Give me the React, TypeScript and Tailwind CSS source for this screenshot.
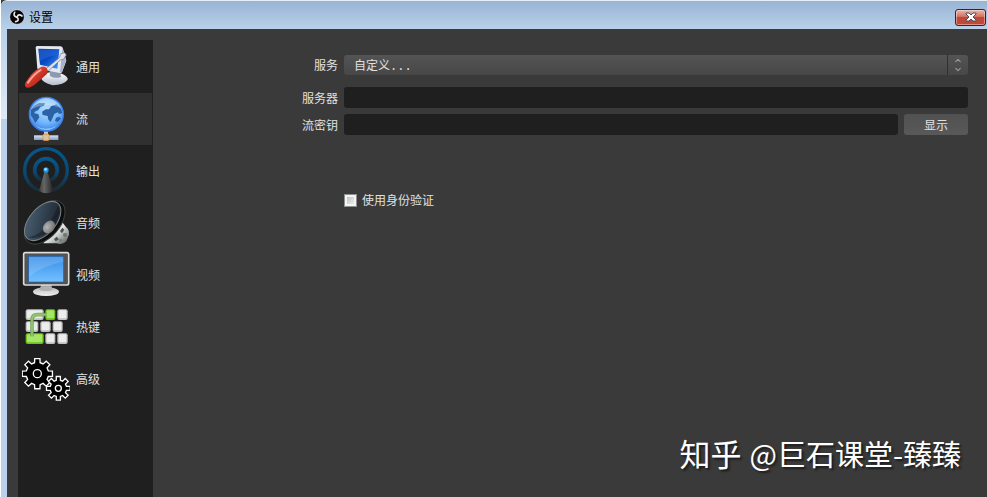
import { ChevronDown, ChevronUp } from 'lucide-react';
import type { ReactNode } from 'react';

const gearPath = (cx: number, cy: number, outer: number, inner: number, teeth = 8) => {
  const points: string[] = [];
  const step = (Math.PI * 2) / teeth;
  for (let i = 0; i < teeth; i++) {
    const a = i * step - Math.PI / 2;
    const corners: [number, number][] = [
      [inner, -0.25],
      [outer, -0.17],
      [outer, 0.17],
      [inner, 0.25],
    ];
    corners.forEach(([r, d]) => {
      points.push(`${(cx + r * Math.cos(a + d)).toFixed(1)},${(cy + r * Math.sin(a + d)).toFixed(1)}`);
    });
  }
  return `M${points.join('L')}Z`;
};

const GeneralIcon = () => (
  <svg viewBox="66 129 144 144" className="size-12 shrink-0">
    <defs>
      <linearGradient id="gen-screen" x1="0" y1="0" x2="1" y2="1">
        <stop offset="0" stopColor="#062f92" />
        <stop offset="0.5" stopColor="#0b4cc8" />
        <stop offset="1" stopColor="#3f9bff" />
      </linearGradient>
      <linearGradient id="gen-handle" x1="0" y1="0" x2="1" y2="1">
        <stop offset="0" stopColor="#f58672" />
        <stop offset="0.45" stopColor="#d63a2a" />
        <stop offset="1" stopColor="#8e1409" />
      </linearGradient>
      <linearGradient id="gen-base" x1="0" y1="0" x2="0" y2="1">
        <stop offset="0" stopColor="#ffffff" />
        <stop offset="1" stopColor="#b3bccb" />
      </linearGradient>
    </defs>
    <path d="M122 232Q126 220 150 217L186 221Q205 230 203 239Q192 254 158 256Q126 248 122 232Z" fill="url(#gen-base)" />
    <path d="M148 208L178 212L184 230Q168 238 150 228Z" fill="#8d9bb2" />
    <path d="M107 142Q108 138 113 138L182 139Q188 140 189 146L199 182L186 217Q184 220 179 219L112 206Z" fill="#e4e8f0" />
    <path d="M187 145L198 182L186 216L180 216Z" fill="#a9b3c8" />
    <path d="M115 146L178 148L172 206L120 194Z" fill="url(#gen-screen)" />
    <path d="M116 148L177 150L175 166Q146 166 119 184Z" fill="#2468d8" opacity="0.6" />
    <path d="M137 207L178 173L182 161L194 158L199 165L190 178L181 180L144 214Z" fill="#dce1ea" stroke="#6b7588" strokeWidth="2" />
    <path d="M76 249Q96 216 118 204Q130 196 139 203Q147 213 140 223L106 253Q86 268 77 261Q73 256 76 249Z" fill="url(#gen-handle)" />
    <path d="M84 248Q102 222 122 210" fill="none" stroke="#ffc2b5" strokeWidth="6" strokeLinecap="round" opacity="0.8" />
  </svg>
);

const StreamIcon = () => (
  <svg viewBox="66 15 144 144" className="size-12 shrink-0">
    <defs>
      <radialGradient id="globe" cx="0.5" cy="0.35" r="0.7">
        <stop offset="0" stopColor="#b9e0ff" />
        <stop offset="0.6" stopColor="#6fb4fa" />
        <stop offset="1" stopColor="#2f74e0" />
      </radialGradient>
      <linearGradient id="pipe" x1="0" y1="0" x2="0" y2="1">
        <stop offset="0" stopColor="#dbe7f5" />
        <stop offset="1" stopColor="#7f9dc4" />
      </linearGradient>
    </defs>
    <rect x="132" y="118" width="12" height="22" fill="#b9cbe2" />
    <rect x="102" y="136" width="73" height="14" fill="url(#pipe)" />
    <rect x="129" y="133" width="18" height="18" rx="3" fill="#d8c3a4" stroke="#e09a4c" strokeWidth="3" />
    <circle cx="139" cy="73" r="51" fill="url(#globe)" stroke="#3c7ee8" strokeWidth="4" />
    <path d="M93 60L103 47L117 39L136 40L131 47L121 50L115 60L104 65L103 70L115 73L118 82L109 95L105 98L100 87L92 75Z" fill="#2b62a6" />
    <path d="M126 65L137 58L147 58L154 48L170 43L183 56L187 69L178 72L173 67L163 72L158 83L152 96L145 89L143 78L128 75Z" fill="#2b62a6" />
    <path d="M168 83L178 80L183 86L173 96L165 93Z" fill="#2b62a6" />
    <path d="M94 57Q112 26 139 25Q167 27 182 53Q138 36 94 57Z" fill="#ffffff" opacity="0.3" />
    <path d="M107 108Q138 125 171 107Q139 133 107 108Z" fill="#a8deff" opacity="0.7" />
  </svg>
);

const OutputIcon = () => (
  <svg viewBox="66 171 144 144" className="size-12 shrink-0">
    <defs>
      <linearGradient id="mast" x1="0" y1="0" x2="1" y2="0">
        <stop offset="0" stopColor="#3a3a3a" />
        <stop offset="0.35" stopColor="#666666" />
        <stop offset="1" stopColor="#222222" />
      </linearGradient>
      <linearGradient id="wave" x1="0" y1="0" x2="0" y2="1">
        <stop offset="0" stopColor="#07578c" />
        <stop offset="0.6" stopColor="#094870" />
        <stop offset="1" stopColor="#1b2a34" />
      </linearGradient>
    </defs>
    <circle cx="138" cy="240" r="64" fill="none" stroke="url(#wave)" strokeWidth="10" />
    <circle cx="138" cy="240" r="34" fill="none" stroke="url(#wave)" strokeWidth="11" />
    <path d="M134 243L142 243L160 302Q139 317 117 302Z" fill="url(#mast)" />
    <circle cx="138" cy="240" r="8" fill="#1698e8" />
    <circle cx="137" cy="238" r="4" fill="#9fe0ff" />
  </svg>
);

const AudioIcon = () => (
  <svg viewBox="66 12 144 144" className="size-12 shrink-0">
    <defs>
      <linearGradient id="cone" x1="0" y1="0" x2="1" y2="1">
        <stop offset="0" stopColor="#50657a" />
        <stop offset="0.55" stopColor="#2f3e4c" />
        <stop offset="1" stopColor="#171c22" />
      </linearGradient>
      <linearGradient id="magnet" x1="0" y1="0" x2="1" y2="1">
        <stop offset="0" stopColor="#8b938f" />
        <stop offset="0.5" stopColor="#e4e8e5" />
        <stop offset="1" stopColor="#4a4f4d" />
      </linearGradient>
      <radialGradient id="cap" cx="0.4" cy="0.35" r="0.7">
        <stop offset="0" stopColor="#b4b4b4" />
        <stop offset="1" stopColor="#6d6d6d" />
      </radialGradient>
    </defs>
    <path d="M184 78L198 96Q209 104 207 119L199 139Q188 151 170 145L130 145Z" fill="url(#magnet)" />
    <path d="M180 108L187 98L193 104L186 115ZM162 132L170 125L177 133L167 139Z" fill="#4b5452" />
    <circle cx="195" cy="120" r="6" fill="#6e7774" />
    <circle cx="182" cy="136" r="5" fill="#77807d" />
    <ellipse cx="134" cy="82" rx="77" ry="45" transform="rotate(-49 134 82)" fill="#0c0d0e" stroke="#3a403e" strokeWidth="3" />
    <ellipse cx="128" cy="78" rx="70" ry="39" transform="rotate(-49 128 78)" fill="url(#cone)" stroke="#7b8581" strokeWidth="3" />
    <path d="M82 126Q134 126 174 34Q185 51 158 94Q122 140 82 126Z" fill="#111820" opacity="0.5" />
    <ellipse cx="147" cy="96" rx="21" ry="16" transform="rotate(-50 147 96)" fill="url(#cap)" />
  </svg>
);

const VideoIcon = () => (
  <svg viewBox="66 168 144 144" className="size-12 shrink-0">
    <defs>
      <linearGradient id="lcd" x1="0" y1="0" x2="0" y2="1">
        <stop offset="0" stopColor="#398ee8" />
        <stop offset="1" stopColor="#72c1ff" />
      </linearGradient>
      <linearGradient id="stand" x1="0" y1="0" x2="0" y2="1">
        <stop offset="0" stopColor="#bdbdbd" />
        <stop offset="1" stopColor="#f0f0f0" />
      </linearGradient>
    </defs>
    <path d="M124 268H153L158 285H119Z" fill="#a7a7a7" />
    <ellipse cx="138" cy="290" rx="39" ry="13" fill="url(#stand)" />
    <ellipse cx="138" cy="282" rx="21" ry="6" fill="#b0b0b0" />
    <rect x="71" y="173" width="135" height="97" rx="5" fill="#4a4a4a" stroke="#dcdcdc" strokeWidth="5" />
    <rect x="76" y="178" width="125" height="88" fill="#555555" />
    <rect x="86" y="184" width="105" height="77" fill="url(#lcd)" stroke="#1f5fae" strokeWidth="2" />
    <path d="M87 185H190V200Q126 212 87 246Z" fill="#ffffff" opacity="0.14" />
  </svg>
);

const keys = [
  { x: 77, y: 28, w: 54, on: false },
  { x: 136, y: 28, w: 30, on: true },
  { x: 172, y: 28, w: 31, on: false },
  { x: 77, y: 64, w: 38, on: false },
  { x: 121, y: 64, w: 31, on: false },
  { x: 158, y: 64, w: 30, on: false },
  { x: 77, y: 100, w: 54, on: true },
  { x: 136, y: 100, w: 30, on: false },
  { x: 172, y: 100, w: 31, on: false },
];

const HotkeysIcon = () => (
  <svg viewBox="66 9 144 144" className="size-12 shrink-0">
    {keys.map((k) => (
      <g key={`${k.x}-${k.y}`}>
        <rect x={k.x} y={k.y} width={k.w} height="32" rx="6" fill={k.on ? '#6cc01f' : '#c0c0c0'} />
        <rect x={k.x + 4} y={k.y + 3} width={k.w - 8} height="24" rx="4" fill={k.on ? '#a6e565' : '#ececec'} />
      </g>
    ))}
    <path d="M96 109V60Q96 44 112 44H140" fill="none" stroke="#6ba548" strokeWidth="11" opacity="0.85" />
    <path d="M96 109V60Q96 44 112 44H140" fill="none" stroke="#94c475" strokeWidth="5" />
  </svg>
);

const AdvancedIcon = () => (
  <svg viewBox="66 165 144 144" className="size-12 shrink-0">
    <g fill="#000000" stroke="#ffffff" strokeWidth="4" strokeLinejoin="miter">
      <path d={gearPath(112, 221, 46, 34)} />
      <circle cx="112" cy="221" r="12" />
      <path d={gearPath(175, 265, 36, 25)} />
      <circle cx="175" cy="265" r="9" />
    </g>
  </svg>
);

const ObsLogo = () => (
  <svg viewBox="0 0 48 48" className="size-4 shrink-0">
    <circle cx="24" cy="24" r="22" fill="#050505" stroke="#dfe7f0" strokeWidth="2" />
    <g fill="none" stroke="#e8e8e8" strokeWidth="5" strokeLinecap="round">
      <path d="M17 10Q11 20 23 25" />
      <path d="M39 21Q29 13 24 24" />
      <path d="M20 38Q32 36 25 25" />
    </g>
  </svg>
);

type NavItem = {
  label: string;
  icon: ReactNode;
};

const navItems: NavItem[] = [
  { label: '通用', icon: <GeneralIcon /> },
  { label: '流', icon: <StreamIcon /> },
  { label: '输出', icon: <OutputIcon /> },
  { label: '音频', icon: <AudioIcon /> },
  { label: '视频', icon: <VideoIcon /> },
  { label: '热键', icon: <HotkeysIcon /> },
  { label: '高级', icon: <AdvancedIcon /> },
];

const TitleBar = () => (
  <header className="flex h-[29px] items-center justify-between rounded-tl-md border-t border-[#e6eef7] bg-linear-to-b from-[#98b4d3] to-[#b9d1ea] pl-2 pr-px">
    <div className="flex items-center gap-1 pt-1">
      <ObsLogo />
      <h1 className="text-xs text-black">设置</h1>
    </div>
    <button
      type="button"
      aria-label="关闭"
      className="mt-1 flex h-[17px] w-[31px] items-center justify-center rounded-[3px] border border-[#4a1c1c] bg-linear-to-b from-[#e5aa9d] from-10% via-[#d2705f] via-45% to-[#c0483a] to-50% ring-1 ring-inset ring-white/40"
    >
      <svg viewBox="0 0 12 10" className="h-[10px] w-3">
        <path d="M1 1H4L6 3L8 1H11V2L8 5L11 8V9H8L6 7L4 9H1V8L4 5L1 2Z" fill="#ffffff" stroke="#4a4f63" strokeWidth="1" />
      </svg>
    </button>
  </header>
);

const Sidebar = () => (
  <nav className="w-[135px] shrink-0 bg-[#1f1f1f] px-px pt-px">
    <ul>
      {navItems.map((item) => (
        <li key={item.label}>
          <button
            type="button"
            className={`flex h-[52px] w-full items-center gap-[6px] pl-[3px] text-xs ${
              item.label === '流' ? 'bg-[#303030]' : ''
            }`}
          >
            {item.icon}
            {item.label}
          </button>
        </li>
      ))}
    </ul>
  </nav>
);

const StreamForm = () => (
  <form className="flex-1 pl-[11px] pr-[19px] pt-[15px]">
    <div className="grid grid-cols-[174px_1fr] items-center gap-x-[6px] text-xs">
      <label htmlFor="service" className="text-right">
        服务
      </label>
      <div className="relative">
        <select
          id="service"
          className="block h-5 w-full appearance-none rounded-[3px] bg-linear-to-b from-[#545454] to-[#474747] pl-[10px] pt-1 font-['Liberation_Mono','Noto_Sans_CJK_SC',monospace] text-xs"
        >
          <option>自定义...</option>
        </select>
        <span className="pointer-events-none absolute inset-y-0 right-0 flex w-[21px] flex-col items-center justify-center border-l border-[#303030] text-[#9a9a9a]">
          <ChevronUp className="h-[9px] w-3" strokeWidth={3} />
          <ChevronDown className="h-[9px] w-3" strokeWidth={3} />
        </span>
      </div>

      <label htmlFor="server" className="mt-3 text-right">
        服务器
      </label>
      <input id="server" type="text" className="mt-3 h-[21px] w-full rounded-[3px] bg-[#1f1f1f] px-2" />

      <label htmlFor="stream-key" className="mt-[6px] text-right">
        流密钥
      </label>
      <div className="mt-[6px] flex gap-[6px]">
        <input id="stream-key" type="password" className="h-[21px] min-w-0 flex-1 rounded-[3px] bg-[#1f1f1f] px-2" />
        <button type="button" className="h-[21px] w-16 rounded-[3px] bg-linear-to-b from-[#515151] to-[#595959]">
          显示
        </button>
      </div>

      <label className="col-start-2 mt-[57px] flex items-center gap-[5px]">
        <input
          type="checkbox"
          className="size-[13px] appearance-none border border-[#8e8f8f] bg-linear-to-br from-[#b4b9be] to-[#f6f6f6] ring-2 ring-inset ring-[#f4f4f4] checked:bg-[#4a6ea8]"
        />
        使用身份验证
      </label>
    </div>
  </form>
);

export default function App() {
  return (
    <div className="relative flex min-h-screen flex-col border-l border-white bg-[#3a3a3a] font-['Noto_Sans_CJK_SC',sans-serif] text-[#e1e1e1]">
      <TitleBar />
      <div className="flex flex-1">
        <div className="w-[6px] shrink-0 bg-[#b9d1ea]">
          <div className="h-[90px] bg-linear-to-b from-[#b9d1ea] to-[#dfeaf6]" />
        </div>
        <main className="flex flex-1 bg-[#3a3a3a] pl-[11px] pt-[11px]">
          <Sidebar />
          <StreamForm />
        </main>
      </div>
      <p className="absolute bottom-6 right-[26px] flex items-baseline gap-2 text-[29px] leading-[40px] font-normal text-white [text-shadow:2px_2px_2px_#1c1c1c]">
        <span className="text-[31px]">知乎</span>
        <span>@巨石课堂-臻臻</span>
      </p>
    </div>
  );
}
